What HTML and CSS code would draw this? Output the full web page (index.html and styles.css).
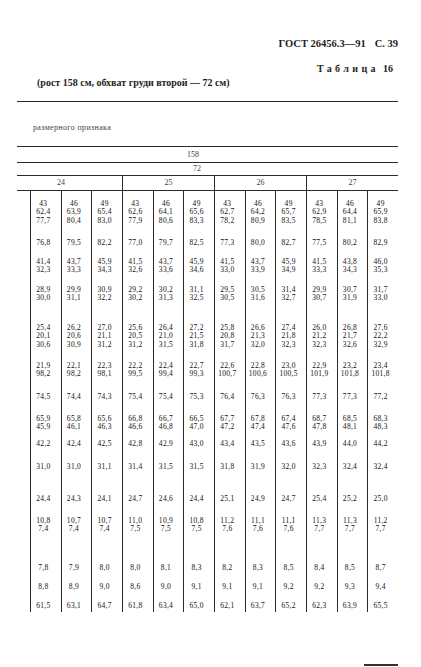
FILE: index.html
```html
<!DOCTYPE html>
<html lang="ru">
<head>
<meta charset="utf-8">
<link rel="stylesheet" href="styles.css">
</head>
<body>
<div class="page">
  <div class="gost">ГОСТ 26456.3—91<span class="pg">С. 39</span></div>
  <div class="tabno"><span class="spaced">Таблица</span>16</div>
  <div class="title">(рост 158 см, обхват груди второй — 72 см)</div>
  <div class="rule"></div>
  <div class="label">размерного признака</div>
  <div class="table">
    <div class="hrow h158">158</div>
    <div class="hrow h72">72</div>
    <div class="groups">
      <div class="g g1">24</div>
      <div class="g">25</div>
      <div class="g">26</div>
      <div class="g">27</div>
    </div>
    <div class="tbody">
      <div class="row r1"><div class="lc"></div>
        <div class="c">43<br>62,4<br>77,7</div><div class="c">46<br>63,9<br>80,4</div><div class="c">49<br>65,4<br>83,0</div>
        <div class="c">43<br>62,6<br>77,9</div><div class="c">46<br>64,1<br>80,6</div><div class="c">49<br>65,6<br>83,3</div>
        <div class="c">43<br>62,7<br>78,2</div><div class="c">46<br>64,2<br>80,9</div><div class="c">49<br>65,7<br>83,5</div>
        <div class="c">43<br>62,9<br>78,5</div><div class="c">46<br>64,4<br>81,1</div><div class="c">49<br>65,9<br>83,8</div>
      </div>
      <div class="row r2"><div class="lc"></div>
        <div class="c">76,8</div><div class="c">79,5</div><div class="c">82,2</div>
        <div class="c">77,0</div><div class="c">79,7</div><div class="c">82,5</div>
        <div class="c">77,3</div><div class="c">80,0</div><div class="c">82,7</div>
        <div class="c">77,5</div><div class="c">80,2</div><div class="c">82,9</div>
      </div>
      <div class="row r3"><div class="lc"></div>
        <div class="c">41,4<br>32,3</div><div class="c">43,7<br>33,3</div><div class="c">45,9<br>34,3</div>
        <div class="c">41,5<br>32,6</div><div class="c">43,7<br>33,6</div><div class="c">45,9<br>34,6</div>
        <div class="c">41,5<br>33,0</div><div class="c">43,7<br>33,9</div><div class="c">45,9<br>34,9</div>
        <div class="c">41,5<br>33,3</div><div class="c">43,8<br>34,3</div><div class="c">46,0<br>35,3</div>
      </div>
      <div class="row r4"><div class="lc"></div>
        <div class="c">28,9<br>30,0</div><div class="c">29,9<br>31,1</div><div class="c">30,9<br>32,2</div>
        <div class="c">29,2<br>30,2</div><div class="c">30,2<br>31,3</div><div class="c">31,1<br>32,5</div>
        <div class="c">29,5<br>30,5</div><div class="c">30,5<br>31,6</div><div class="c">31,4<br>32,7</div>
        <div class="c">29,9<br>30,7</div><div class="c">30,7<br>31,9</div><div class="c">31,7<br>33,0</div>
      </div>
      <div class="row r5"><div class="lc"></div>
        <div class="c">25,4<br>20,1<br>30,6</div><div class="c">26,2<br>20,6<br>30,9</div><div class="c">27,0<br>21,1<br>31,2</div>
        <div class="c">25,6<br>20,5<br>31,2</div><div class="c">26,4<br>21,0<br>31,5</div><div class="c">27,2<br>21,5<br>31,8</div>
        <div class="c">25,8<br>20,8<br>31,7</div><div class="c">26,6<br>21,3<br>32,0</div><div class="c">27,4<br>21,8<br>32,3</div>
        <div class="c">26,0<br>21,2<br>32,3</div><div class="c">26,8<br>21,7<br>32,6</div><div class="c">27,6<br>22,2<br>32,9</div>
      </div>
      <div class="row r6"><div class="lc"></div>
        <div class="c">21,9<br>98,2</div><div class="c">22,1<br>98,2</div><div class="c">22,3<br>98,1</div>
        <div class="c">22,2<br>99,5</div><div class="c">22,4<br>99,4</div><div class="c">22,7<br>99,3</div>
        <div class="c">22,6<br>100,7</div><div class="c">22,8<br>100,6</div><div class="c">23,0<br>100,5</div>
        <div class="c">22,9<br>101,9</div><div class="c">23,2<br>101,8</div><div class="c">23,4<br>101,8</div>
      </div>
      <div class="row r7"><div class="lc"></div>
        <div class="c">74,5</div><div class="c">74,4</div><div class="c">74,3</div>
        <div class="c">75,4</div><div class="c">75,4</div><div class="c">75,3</div>
        <div class="c">76,4</div><div class="c">76,3</div><div class="c">76,3</div>
        <div class="c">77,3</div><div class="c">77,3</div><div class="c">77,2</div>
      </div>
      <div class="row r8"><div class="lc"></div>
        <div class="c">65,9<br>45,9</div><div class="c">65,8<br>46,1</div><div class="c">65,6<br>46,3</div>
        <div class="c">66,8<br>46,6</div><div class="c">66,7<br>46,8</div><div class="c">66,5<br>47,0</div>
        <div class="c">67,7<br>47,2</div><div class="c">67,8<br>47,4</div><div class="c">67,4<br>47,6</div>
        <div class="c">68,7<br>47,8</div><div class="c">68,5<br>48,1</div><div class="c">68,3<br>48,3</div>
      </div>
      <div class="row r9"><div class="lc"></div>
        <div class="c">42,2</div><div class="c">42,4</div><div class="c">42,5</div>
        <div class="c">42,8</div><div class="c">42,9</div><div class="c">43,0</div>
        <div class="c">43,4</div><div class="c">43,5</div><div class="c">43,6</div>
        <div class="c">43,9</div><div class="c">44,0</div><div class="c">44,2</div>
      </div>
      <div class="row r10"><div class="lc"></div>
        <div class="c">31,0</div><div class="c">31,0</div><div class="c">31,1</div>
        <div class="c">31,4</div><div class="c">31,5</div><div class="c">31,5</div>
        <div class="c">31,8</div><div class="c">31,9</div><div class="c">32,0</div>
        <div class="c">32,3</div><div class="c">32,4</div><div class="c">32,4</div>
      </div>
      <div class="row r11"><div class="lc"></div>
        <div class="c">24,4</div><div class="c">24,3</div><div class="c">24,1</div>
        <div class="c">24,7</div><div class="c">24,6</div><div class="c">24,4</div>
        <div class="c">25,1</div><div class="c">24,9</div><div class="c">24,7</div>
        <div class="c">25,4</div><div class="c">25,2</div><div class="c">25,0</div>
      </div>
      <div class="row r12"><div class="lc"></div>
        <div class="c">10,8<br>7,4</div><div class="c">10,7<br>7,4</div><div class="c">10,7<br>7,4</div>
        <div class="c">11,0<br>7,5</div><div class="c">10,9<br>7,5</div><div class="c">10,8<br>7,5</div>
        <div class="c">11,2<br>7,6</div><div class="c">11,1<br>7,6</div><div class="c">11,1<br>7,6</div>
        <div class="c">11,3<br>7,7</div><div class="c">11,3<br>7,7</div><div class="c">11,2<br>7,7</div>
      </div>
      <div class="row r13"><div class="lc"></div>
        <div class="c">7,8</div><div class="c">7,9</div><div class="c">8,0</div>
        <div class="c">8,0</div><div class="c">8,1</div><div class="c">8,3</div>
        <div class="c">8,2</div><div class="c">8,3</div><div class="c">8,5</div>
        <div class="c">8,4</div><div class="c">8,5</div><div class="c">8,7</div>
      </div>
      <div class="row r14"><div class="lc"></div>
        <div class="c">8,8</div><div class="c">8,9</div><div class="c">9,0</div>
        <div class="c">8,6</div><div class="c">9,0</div><div class="c">9,1</div>
        <div class="c">9,1</div><div class="c">9,1</div><div class="c">9,2</div>
        <div class="c">9,2</div><div class="c">9,3</div><div class="c">9,4</div>
      </div>
      <div class="row r15"><div class="lc"></div>
        <div class="c">61,5</div><div class="c">63,1</div><div class="c">64,7</div>
        <div class="c">61,8</div><div class="c">63,4</div><div class="c">65,0</div>
        <div class="c">62,1</div><div class="c">63,7</div><div class="c">65,2</div>
        <div class="c">62,3</div><div class="c">63,9</div><div class="c">65,5</div>
      </div>
    </div>
  </div>
  <div class="mark"></div>
</div>
</body>
</html>
```

FILE: styles.css
```css
html, body {
  margin: 0;
  padding: 0;
  background: #ffffff;
}

.page {
  width: 421px;
  height: 667px;
  box-sizing: border-box;
  padding: 38px 23px 0 17px;
  font-family: "Liberation Serif", "DejaVu Serif", serif;
  color: #1e1e1e;
  overflow: hidden;
}

.gost {
  text-align: right;
  font-size: 10.5px;
  font-weight: bold;
  line-height: 12px;
}

.gost .pg {
  margin-left: 9px;
}

.tabno {
  margin-top: 13px;
  padding-right: 5px;
  text-align: right;
  font-size: 10px;
  font-weight: bold;
  line-height: 12px;
}

.tabno .spaced {
  letter-spacing: 3.4px;
  margin-right: 4px;
}

.title {
  margin-top: 2px;
  padding-left: 20px;
  font-size: 10px;
  font-weight: bold;
  line-height: 12px;
}

.rule {
  margin-top: 12px;
  height: 1px;
  background: #2a2a2a;
}

.label {
  margin-top: 21px;
  padding-left: 16px;
  font-size: 8px;
  line-height: 10px;
  letter-spacing: 0.35px;
  color: #444444;
}

.table {
  margin-top: 13px;
  border-top: 1px solid #2a2a2a;
  font-size: 8px;
}

.hrow {
  text-align: center;
  border-bottom: 1px solid #2a2a2a;
  color: #444444;
}

.h158 {
  height: 15px;
  line-height: 15px;
  padding-right: 29px;
}

.h72 {
  height: 12px;
  line-height: 12px;
  padding-right: 21px;
}

.groups {
  display: grid;
  grid-template-columns: 105px 1fr 1fr 1fr;
  height: 14px;
  line-height: 14px;
  border-bottom: 1px solid #2a2a2a;
  color: #444444;
}

.g {
  text-align: center;
  border-left: 1px solid #2a2a2a;
}

.g1 {
  border-left: none;
  padding-right: 17px;
}

.tbody {
  font-size: 7.5px;
  line-height: 8.3px;
  letter-spacing: 0.3px;
  color: #111111;
}

.row {
  display: grid;
  grid-template-columns: 13px repeat(12, 1fr);
}

.c {
  border-left: 1px solid #2a2a2a;
  text-align: center;
  padding-right: 5px;
  white-space: nowrap;
}

.r1 .c { padding-top: 9px; }
.r1 { height: 48px; }
.r2 { height: 19px; }
.r3 { height: 28px; }
.r4 { height: 38px; }
.r5 { height: 38px; }
.r6 { height: 31px; }
.r7 { height: 22px; }
.r8 { height: 25px; }
.r9 { height: 23px; }
.r10 { height: 32px; }
.r11 { height: 22px; }
.r12 { height: 47px; }
.r13 { height: 19px; }
.r14 { height: 19px; }
.r15 { height: 10px; }

.mark {
  margin: 52px 0 0 auto;
  width: 34px;
  height: 2px;
  background: #333333;
}
```
